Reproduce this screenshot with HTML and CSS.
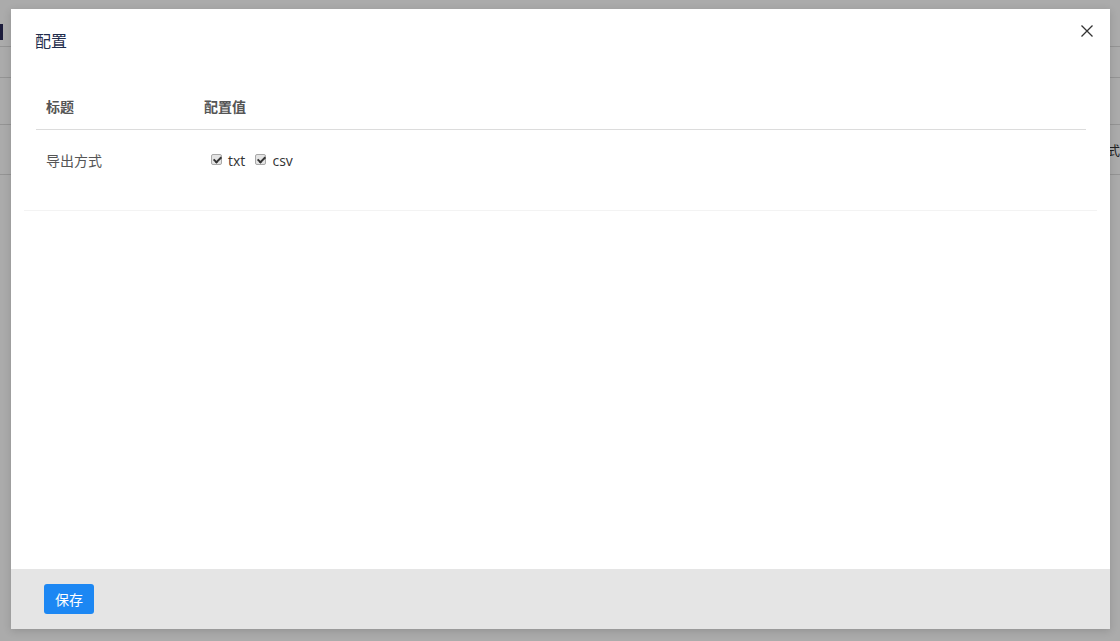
FILE: index.html
```html
<!DOCTYPE html>
<html lang="zh">
<head>
<meta charset="utf-8">
<link rel="stylesheet" href="styles.css">
</head>
<body>
<div class="page">
  <div class="page-bar"><span class="page-mark"></span></div>
  <div class="page-row r1"></div>
  <div class="page-row r2"></div>
  <div class="page-row r3"><span class="page-cell">式</span></div>
  <div class="page-row r4"></div>
</div>
<div class="overlay"></div>
<div class="modal">
  <div class="modal-head">
    <h2 class="modal-title">配置</h2>
    <button class="close" aria-label="close">
      <svg width="14" height="14" viewBox="0 0 14 14"><path d="M1.5 1.5L12.5 12.5M12.5 1.5L1.5 12.5" stroke="#333" stroke-width="1.3" fill="none"/></svg>
    </button>
  </div>
  <div class="modal-body">
    <table class="cfg">
      <thead>
        <tr><th class="c1">标题</th><th>配置值</th></tr>
      </thead>
      <tbody>
        <tr>
          <td class="c1">导出方式</td>
          <td>
            <label class="chk"><input type="checkbox" checked>txt</label>
            <label class="chk"><input type="checkbox" checked>csv</label>
          </td>
        </tr>
      </tbody>
    </table>
    <div class="sep"></div>
  </div>
  <div class="modal-foot">
    <button class="save">保存</button>
  </div>
</div>
</body>
</html>
```
FILE: styles.css
```css
* { box-sizing: border-box; }
html, body { margin: 0; padding: 0; }
body {
  width: 1120px;
  height: 641px;
  overflow: hidden;
  background: #fff;
  font-family: "Noto Sans CJK SC", "Open Sans", sans-serif;
  position: relative;
}
.page { width: 1120px; height: 641px; background: #fff; }
.page-bar { height: 47px; border-bottom: 1px solid #ddd; padding-top: 24px; }
.page-mark { display: block; width: 3px; height: 16px; background: #2a2a5a; }
.page-row { border-bottom: 1px solid #ddd; }
.r1 { height: 31px; }
.r2 { height: 47px; }
.r3 { height: 50px; display: flex; align-items: center; justify-content: flex-end; font-size: 13px; color: #333; }
.page-cell { margin-right: 0; white-space: nowrap; }
.r4 { height: 1px; border: none; }
.overlay { position: absolute; inset: 0; background: rgba(0,0,0,0.33); }
.modal {
  position: absolute;
  left: 11px; top: 9px;
  width: 1099px; height: 620px;
  background: #fff;
  display: flex; flex-direction: column;
  box-shadow: 0 2px 8px rgba(0,0,0,0.15);
}
.modal-head { height: 64px; display: flex; align-items: flex-start; justify-content: space-between; padding: 20px 16px 0 24px; }
.modal-title { margin: 0; font-size: 16px; font-weight: 400; color: #1f2d4d; line-height: 22px; }
.close { border: 0; background: none; padding: 0; margin-top: -5px; width: 14px; height: 14px; cursor: pointer; display: block; }
.close svg { display: block; }
.modal-body { flex: 1; padding: 10px 13px 0 13px; }
.cfg { width: 1050px; margin-left: 12px; border-collapse: collapse; font-size: 14px; }
.cfg th { text-align: left; font-weight: 700; color: #555; height: 46px; padding: 0 0 0 10px; border-bottom: 1px solid #dcdcdc; }
.cfg td { color: #555; height: 62px; padding: 20px 0 0 10px; vertical-align: top; }
.cfg .c1 { width: 158px; }
.chk { display: inline-flex; align-items: center; color: #333; margin-right: 0; font-family: "Open Sans", sans-serif; font-size: 14px; }
.chk input {
  appearance: none; -webkit-appearance: none;
  width: 11px; height: 11px; margin: 0 6px 0 7px;
  background: #e4e4e4; border: 1px solid #a8a8a8; border-radius: 2px;
  position: relative; top: -1px;
}
.chk input:checked::after {
  content: ""; position: absolute; left: 3px; top: 0px;
  width: 3px; height: 6px;
  border: solid #333; border-width: 0 2px 2px 0;
  transform: rotate(45deg);
}
.sep { height: 1px; background: #f3f3f3; margin-top: 19px; }
.modal-foot { height: 60px; background: #e5e5e5; display: flex; align-items: center; padding-left: 33px; }
.save { background: #1c87f3; color: #fff; border: 0; border-radius: 3px; width: 50px; height: 30px; font-size: 14px; font-family: "Noto Sans CJK SC", sans-serif; padding: 0; }
```
